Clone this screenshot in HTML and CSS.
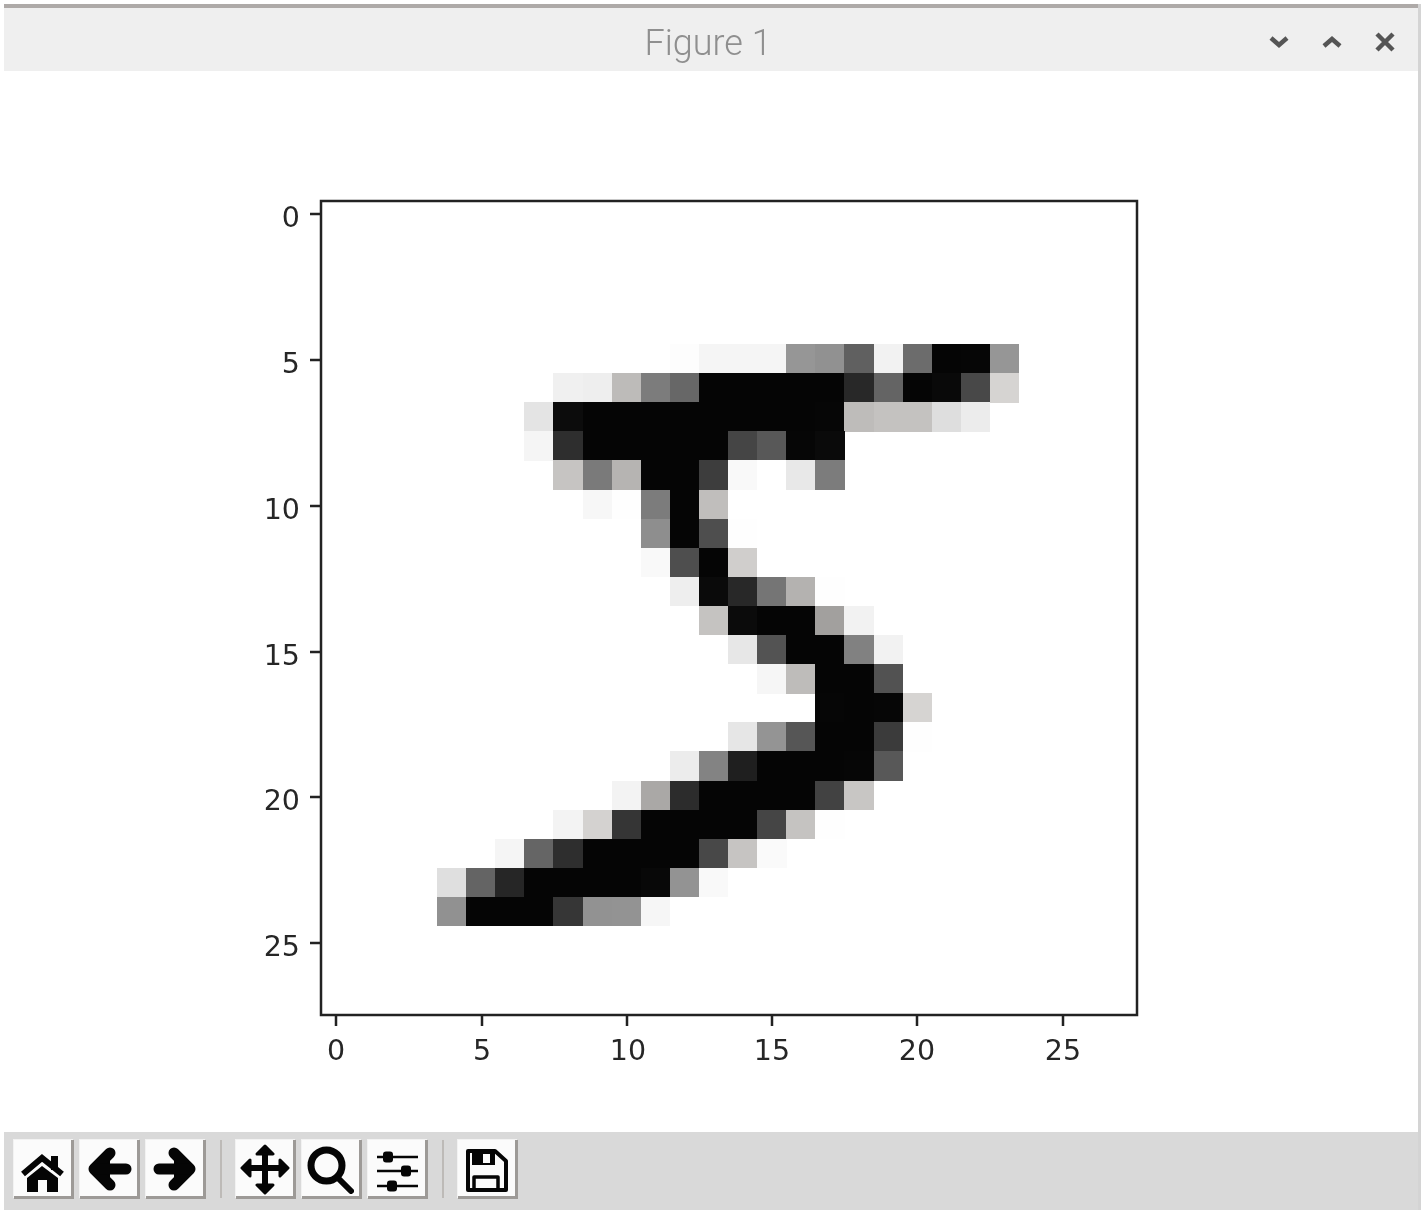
FILE: index.html
```html
<!DOCTYPE html>
<html>
  <head>
    <title>Figure 1</title>
    <link rel="stylesheet" href="styles.css">
  </head>
  <body>
    <div class="window">
      <div class="titlebar">
        <span class="title">Figure 1</span>
        <div class="controls">
          <svg class="control" viewBox="0 0 24 24"><path d="M4 8l8 7 8-7"/></svg>
          <svg class="control" viewBox="0 0 24 24"><path d="M4 16l8-7 8 7"/></svg>
          <svg class="control" viewBox="0 0 24 24"><path d="M4 4l16 16M20 4L4 20"/></svg>
        </div>
      </div>

      <div class="canvas">
        <!-- viewBox uses page coordinates -->
        <svg class="plot" viewBox="4 71 1414 1061">
          <g id="pixels"></g>
          <rect class="frame" x="321" y="201" width="816" height="814"/>
          <g class="ticks">
            <path d="M310 214h11M310 360h11M310 506h11M310 652h11M310 797h11M310 943h11"/>
            <path d="M336 1015v11M482 1015v11M627 1015v11M772 1015v11M917 1015v11M1063 1015v11"/>
          </g>
          <g class="labels-y">
            <text x="300" y="226.500">0</text>
            <text x="300" y="372.500">5</text>
            <text x="300" y="518.500">10</text>
            <text x="300" y="664.500">15</text>
            <text x="300" y="809.500">20</text>
            <text x="300" y="955.500">25</text>
          </g>
          <g class="labels-x">
            <text x="336" y="1060">0</text>
            <text x="482" y="1060">5</text>
            <text x="628" y="1060">10</text>
            <text x="772" y="1060">15</text>
            <text x="917" y="1060">20</text>
            <text x="1063" y="1060">25</text>
          </g>
        </svg>
      </div>

      <div class="toolbar">
        <button class="tool">
          <svg viewBox="0 0 60 59">
            <path class="fill" d="M13 38l15-12 16 12v14H33V40h-9v12H13z"/>
            <path class="line" d="M9 34l19-16 20 16" stroke-width="6"/>
            <path class="fill" d="M37 16h7v14h-7z"/>
          </svg>
        </button>
        <button class="tool">
          <svg viewBox="0 0 60 59">
            <path class="fill-line" d="M30 13L14 29l16 16" stroke-width="11"/>
            <path class="line round" d="M16 29h30" stroke-width="11"/>
          </svg>
        </button>
        <button class="tool">
          <svg viewBox="0 0 60 59">
            <path class="fill-line" d="M28 13l16 16-16 16" stroke-width="11"/>
            <path class="line round" d="M42 29H13" stroke-width="11"/>
          </svg>
        </button>
        <span class="sep"></span>
        <button class="tool">
          <svg viewBox="0 0 60 59">
            <path class="line" d="M29 10v36M10 28h38" stroke-width="6"/>
            <path class="fill-line" d="M29 6l8 8H21zM29 53l-8-8h16zM6 28l8-8v16zM52 28l-8 8V20z" stroke-width="3"/>
          </svg>
        </button>
        <button class="tool">
          <svg viewBox="0 0 60 59">
            <circle class="line" cx="24.500" cy="25.500" r="15.500" stroke-width="7"/>
            <path class="line round" d="M36 38l13 13" stroke-width="6"/>
          </svg>
        </button>
        <button class="tool">
          <svg viewBox="0 0 60 59">
            <path class="line" d="M9 17h41M9 31h41M9 46h41" stroke-width="2.500"/>
            <rect class="fill" x="15" y="11.500" width="10" height="11" rx="3"/>
            <rect class="fill" x="33" y="25.500" width="10" height="11" rx="3"/>
            <rect class="fill" x="19" y="40.500" width="10" height="11" rx="3"/>
          </svg>
        </button>
        <span class="sep"></span>
        <button class="tool">
          <svg viewBox="0 0 60 59">
            <path class="line joined" d="M10 11h27l11 10v29H10z" stroke-width="4"/>
            <path class="fill" d="M14 11h23v14H14z"/>
            <path class="white" d="M25 14h7v9h-7z"/>
            <path class="line joined" d="M16 50V37h24v13" stroke-width="3.500"/>
          </svg>
        </button>
      </div>
    </div>
    <script src="plot.js"></script>
  </body>
</html>
```

FILE: styles.css
```css
html, body {
  margin: 0;
  background: #fff;
}
body {
  height: 1215px;
  overflow: hidden;
}
.window {
  height: 1206px;
  margin: 4px 4px 5px 4px;
  display: flex;
  flex-direction: column;
  border-right: 3px solid #d4d4d4;
}
.titlebar {
  flex: 0 0 63px;
  display: flex;
  align-items: center;
  justify-content: center;
  position: relative;
  background: #efefef;
  border-top: 4px solid #aeaaa8;
}
.title {
  margin-top: 6px;
  margin-left: -6px;
  font-family: Roboto, sans-serif;
  font-weight: 300;
  font-size: 36px;
  color: #8f8f8f;
  filter: blur(0.6px);
}
.controls {
  position: absolute;
  right: 21px;
  top: 22px;
  display: flex;
  gap: 29px;
  filter: blur(0.5px);
}
.control {
  width: 24px;
  height: 24px;
  fill: none;
  stroke: #555;
  stroke-width: 4.5;
}
.canvas {
  flex: 1;
  background: #fff;
}
.plot {
  display: block;
  width: 100%;
  height: 100%;
  filter: blur(0.6px);
}
#pixels {
  shape-rendering: crispEdges;
}
.frame {
  fill: none;
  stroke: #222;
  stroke-width: 2.5;
}
.ticks path {
  fill: none;
  stroke: #222;
  stroke-width: 2.5;
}
.labels-y text, .labels-x text {
  font-family: "DejaVu Sans", sans-serif;
  font-size: 28.5px;
  fill: #262626;
}
.labels-y text {
  text-anchor: end;
}
.labels-x text {
  text-anchor: middle;
}
.toolbar {
  flex: 0 0 78px;
  box-sizing: border-box;
  display: flex;
  align-items: flex-start;
  gap: 6px;
  padding: 8px 10px;
  background: #d9d9d9;
}
.tool {
  width: 60px;
  height: 59px;
  padding: 0;
  box-sizing: border-box;
  background: #fbfbfb;
  border: none;
  box-shadow: inset -3px -3px 0 #9d9a97, -1px -1px 0 #f2f2f2;
}
.tool svg {
  display: block;
  width: 60px;
  height: 59px;
  filter: blur(0.6px);
}
.fill {
  fill: #050505;
}
.white {
  fill: #fbfbfb;
}
.line {
  fill: none;
  stroke: #050505;
}
.fill-line {
  fill: #050505;
  stroke: #050505;
  stroke-linecap: round;
  stroke-linejoin: round;
}
.round {
  stroke-linecap: round;
  stroke-linejoin: round;
}
.joined {
  stroke-linejoin: round;
}
.sep {
  width: 2px;
  height: 58px;
  margin: 0 8px;
  background: #bdbab7;
}
```

FILE: plot.js
```js
// first MNIST digit: [row, first column, values]
var rows = [
  [5, 12, [3, 18, 18, 18, 126, 136, 175, 26, 166, 255, 247, 127]],
  [6, 8, [30, 36, 94, 154, 170, 253, 253, 253, 253, 253, 225, 172, 253, 242, 195, 64]],
  [7, 7, [49, 238, 253, 253, 253, 253, 253, 253, 253, 253, 251, 93, 82, 82, 56, 39]],
  [8, 7, [18, 219, 253, 253, 253, 253, 253, 198, 182, 247, 241]],
  [9, 8, [80, 156, 107, 253, 253, 205, 11, 0, 43, 154]],
  [10, 9, [14, 1, 154, 253, 90]],
  [11, 11, [139, 253, 190, 2]],
  [12, 11, [11, 190, 253, 70]],
  [13, 12, [35, 241, 225, 160, 108, 1]],
  [14, 13, [81, 240, 253, 253, 119, 25]],
  [15, 14, [45, 186, 253, 253, 150, 27]],
  [16, 15, [16, 93, 252, 253, 187]],
  [17, 17, [249, 253, 249, 64]],
  [18, 14, [46, 130, 183, 253, 253, 207, 2]],
  [19, 12, [39, 148, 229, 253, 253, 253, 250, 182]],
  [20, 10, [24, 114, 221, 253, 253, 253, 253, 201, 78]],
  [21, 8, [23, 66, 213, 253, 253, 253, 253, 198, 81, 2]],
  [22, 6, [18, 171, 219, 253, 253, 253, 253, 195, 80, 9]],
  [23, 4, [55, 172, 226, 253, 253, 253, 253, 244, 133, 11]],
  [24, 4, [136, 253, 253, 253, 212, 135, 132, 16]]
];

// value -> grey as it looks in the screenshot, straight lines between points
var curve = [[0, 255], [18, 245], [36, 238], [56, 222], [82, 196], [107, 182], [126, 150],
  [136, 145], [156, 122], [175, 96], [195, 72], [225, 40], [238, 12], [247, 6], [255, 5]];

function shadeOf(value) {
  for (var i = 1; i < curve.length; i++) {
    if (value <= curve[i][0]) {
      var a = curve[i - 1], b = curve[i];
      return Math.round(a[1] + (b[1] - a[1]) * (value - a[0]) / (b[0] - a[0]));
    }
  }
  return 5;
}

var group = document.getElementById("pixels");
var cell = 29.1;

rows.forEach(function (row) {
  row[2].forEach(function (value, i) {
    var s = shadeOf(value);
    // mid-light greys have a slight warm cast
    var warm = s > 160 && s < 215 ? 4 : 0;
    var rect = document.createElementNS("http://www.w3.org/2000/svg", "rect");
    rect.setAttribute("x", 320.6 + (row[1] + i) * cell);
    rect.setAttribute("y", 198.5 + row[0] * cell);
    rect.setAttribute("width", cell + 0.3);
    rect.setAttribute("height", cell + 0.3);
    rect.setAttribute("fill", "rgb(" + s + "," + (s - warm / 2) + "," + (s - warm) + ")");
    group.appendChild(rect);
  });
});
```
